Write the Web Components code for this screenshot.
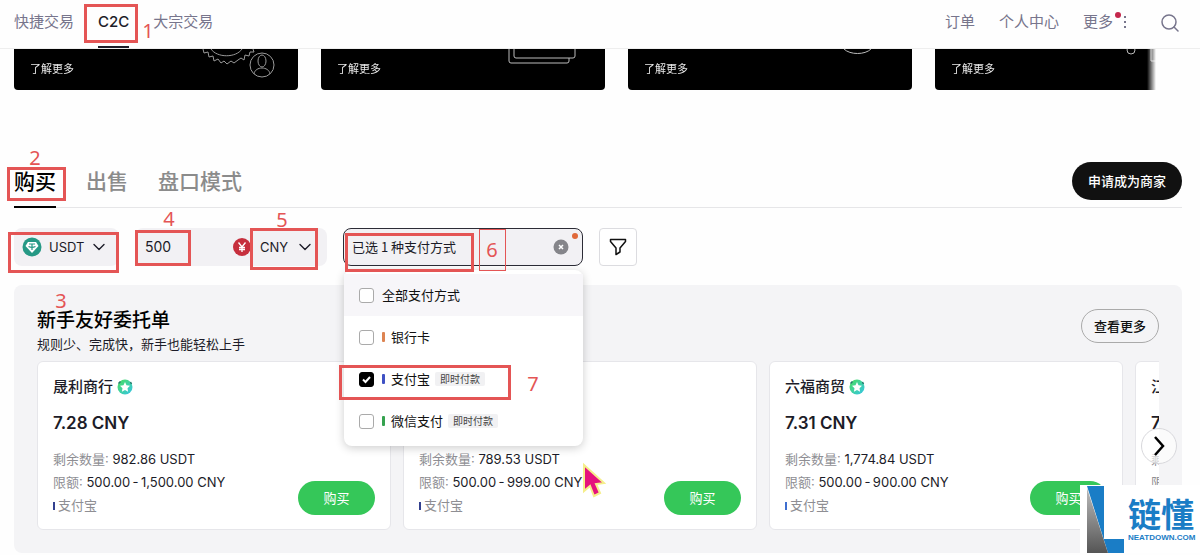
<!DOCTYPE html>
<html lang="zh-CN">
<head>
<meta charset="utf-8">
<title>C2C 交易</title>
<style>
    body {
        margin: 0;
        position: relative;
        background: #fefefe;
        color: #1c1c28;
        font: 13px/22px Inter, "Noto Sans CJK SC", sans-serif;
        overflow-x: hidden;
    }
    main {
        padding: 0 18px 0 14px;
    }
    .promos {
        display: flex;
        gap: 23px;
        margin-right: 26px;
        overflow: hidden;
        -webkit-mask-image: linear-gradient(to left, transparent, #000 9px);
        mask-image: linear-gradient(to left, transparent, #000 9px);
    }
    trade-tabs {
        margin-top: 72px;
    }
    .filters {
        display: flex;
        gap: 16px;
        margin: 20px 0 19px;
    }
    svg {
        display: block;
        fill: none;
    }
</style>
</head>
<body>
<page-header></page-header>
<main>
    <div class="promos">
        <promo-card>
            <svg width="134" height="41" stroke="#999" stroke-width="1">
                <path d="M39 0l1 4 4-1 1 5 4-1 1 5 4-2 3 4 3-2 3 3 4-3 3 2 4-3 3-2 3 2 1-5 4 1 1-4 4 0-1-3"/>
                <path d="M47 0c6 9 25 9 31 0"/>
                <circle cx="98" cy="16" r="12"/>
                <ellipse cx="98" cy="12" rx="4" ry="6"/>
                <path d="M90 25c1-8 15-8 16 0"/>
            </svg>
        </promo-card>
        <promo-card>
            <svg width="134" height="41" stroke="#bbb" stroke-width="1">
                <path d="M38 0v12q0 2 2 2h56q2 0 2-2V9M43 0v7q0 2 2 2h57q2 0 2-2V0"/>
            </svg>
        </promo-card>
        <promo-card>
            <svg width="134" height="41" stroke="#bbb" stroke-width="1">
                <path d="M66 0c6 6 21 6 27 0"/>
            </svg>
        </promo-card>
        <promo-card>
            <svg width="134" height="41" stroke="#bbb" stroke-width="1">
                <circle cx="46" cy="1" r="4"/>
                <path d="M66 0v12h8"/>
            </svg>
        </promo-card>
    </div>
    <trade-tabs></trade-tabs>
    <div class="filters">
        <coin-select></coin-select>
        <amount-field></amount-field>
        <pay-picker>
            <pay-option>全部支付方式</pay-option>
            <pay-option color="#dd8452">银行卡</pay-option>
            <pay-option color="#3f51c4" tag="即时付款" checked>支付宝</pay-option>
            <pay-option color="#35a24f" tag="即时付款">微信支付</pay-option>
        </pay-picker>
        <filter-button></filter-button>
    </div>
    <offer-panel>
        <offer-card price="7.28 CNY" amount="982.86 USDT" limit="500.00&thinsp;-&thinsp;1,500.00 CNY">晟利商行</offer-card>
        <offer-card price="7.30 CNY" amount="789.53 USDT" limit="500.00&thinsp;-&thinsp;999.00 CNY">商行</offer-card>
        <offer-card price="7.31 CNY" amount="1,774.84 USDT" limit="500.00&thinsp;-&thinsp;900.00 CNY" color="#3f6fd0">六福商贸</offer-card>
        <offer-card price="7" amount="" limit="">江</offer-card>
    </offer-panel>
</main>
<guide-marks></guide-marks>
<site-stamp></site-stamp>

<script>
    class BaseElement extends HTMLElement {
        constructor() {
            super()
            this.attachShadow({mode: 'open'})
        }

        connectedCallback() {
            this.shadowRoot.innerHTML = `
            <style>
                :host, * { box-sizing: border-box; }
                button, input, select {
                    font: inherit;
                    color: inherit;
                    margin: 0;
                    padding: 0;
                    border: 0;
                    background: none;
                    appearance: none;
                    outline: none;
                }
                button { cursor: pointer; }
                a { color: inherit; text-decoration: none; }
                svg { display: block; fill: none; flex: none; }
            </style>` + this.template()
        }
    }

    const chevron = `<svg width="12" height="8" stroke="#1c1c28" stroke-width="1.4" stroke-linecap="round" stroke-linejoin="round"><path d="M1 1.5l5 5 5-5"/></svg>`

    class PageHeader extends BaseElement {
        template() {
            return `
            <style>
                :host { display: block; }
                header {
                    display: flex;
                    justify-content: space-between;
                    height: 49px;
                    padding: 0 21px 0 14px;
                    border-bottom: 1px solid #eee;
                    font-size: 15px;
                    line-height: 43px;
                    color: #77758c;
                }
                nav { display: flex; gap: 24px; }
                .active {
                    color: #1c1c28;
                    font-weight: 500;
                    border-bottom: 2px solid #1c1c28;
                }
                .more { display: flex; gap: 10px; align-items: center; height: 43px; }
                .more span { position: relative; }
                .more i {
                    position: absolute;
                    left: 32px;
                    top: 12px;
                    width: 6px;
                    height: 6px;
                    border-radius: 50%;
                    background: #c4284c;
                }
                .search { height: 45px; margin-left: 10px; }
            </style>
            <header>
                <nav>
                    <a href="#">快捷交易</a>
                    <a href="#" class="active">C2C</a>
                    <a href="#">大宗交易</a>
                </nav>
                <nav>
                    <a href="#">订单</a>
                    <a href="#">个人中心</a>
                    <a href="#" class="more">
                        <span>更多<i></i></span>
                        <svg width="4" height="14"><path fill="#77758c" d="M1 1h2v2H1zM1 6h2v2H1zM1 11h2v2H1z"/></svg>
                    </a>
                    <button class="search" aria-label="搜索">
                        <svg width="18" height="18" stroke="#77758c" stroke-width="1.5" stroke-linecap="round"><circle cx="8" cy="8" r="7"/><path d="M13 13l4 4"/></svg>
                    </button>
                </nav>
            </header>`
        }
    }

    class PromoCard extends BaseElement {
        template() {
            return `
            <style>
                :host {
                    display: flex;
                    justify-content: space-between;
                    flex: 0 0 284px;
                    height: 41px;
                    background: #000;
                    border-radius: 0 0 4px 4px;
                }
                a { color: #e8e8e8; font-size: 11px; line-height: 40px; padding-left: 16px; }
            </style>
            <a href="#">了解更多</a>
            <slot></slot>`
        }
    }

    class TradeTabs extends BaseElement {
        template() {
            return `
            <style>
                :host {
                    display: flex;
                    justify-content: space-between;
                    align-items: flex-start;
                    height: 46px;
                    border-bottom: 1px solid #e6e6e8;
                }
                nav { display: flex; gap: 30px; font-size: 21px; font-weight: 500; line-height: 40px; color: #8b8b8b; }
                a { height: 46px; }
                .active { color: #000; border-bottom: 2px solid #000; }
                button {
                    height: 38px;
                    padding: 0 16px;
                    border-radius: 19px;
                    background: #111;
                    color: #fff;
                    font-weight: 500;
                }
            </style>
            <nav>
                <a href="#" class="active">购买</a>
                <a href="#">出售</a>
                <a href="#">盘口模式</a>
            </nav>
            <button>申请成为商家</button>`
        }
    }

    class CoinSelect extends BaseElement {
        template() {
            return `
            <style>
                :host {
                    display: flex;
                    align-items: center;
                    width: 105px;
                    height: 38px;
                    padding: 0 14px 0 8px;
                    border-radius: 8px;
                    background: #f2f1f4;
                }
                select { margin: 0 auto 0 7px; }
            </style>
            <svg width="20" height="20">
                <circle cx="10" cy="10" r="9.5" fill="#269985"/>
                <path d="M6 5h8l2.5 4L10 16 3.5 9z" fill="#fff"/>
                <path d="M7 7h6M10 7v6M6.5 9.5c2 1 5 1 7 0" stroke="#269985" stroke-width="1.2"/>
            </svg>
            <select aria-label="币种"><option>USDT</option></select>
            ${chevron}`
        }
    }

    class AmountField extends BaseElement {
        template() {
            return `
            <style>
                :host {
                    display: flex;
                    align-items: center;
                    width: 192px;
                    height: 38px;
                    padding: 0 16px 0 10px;
                    border-radius: 8px;
                    background: #f2f1f4;
                }
                input { flex: 1; min-width: 0; font-size: 14px; }
                select { margin: 0 10px 0 9px; }
            </style>
            <input type="text" aria-label="金额" value="500">
            <svg width="18" height="18">
                <circle cx="9" cy="9" r="9" fill="#c62f3d"/>
                <path d="M5.5 4.5L9 9l3.5-4.5M9 9v5M6 9.5h6M6 11.5h6" stroke="#fff" stroke-width="1.3"/>
            </svg>
            <select aria-label="法币"><option>CNY</option></select>
            ${chevron}`
        }
    }

    class PayPicker extends BaseElement {
        template() {
            return `
            <style>
                :host { display: block; position: relative; width: 240px; }
                .field {
                    display: flex;
                    align-items: center;
                    justify-content: space-between;
                    height: 38px;
                    padding: 0 13px 0 8px;
                    border: 1px solid #2c2c36;
                    border-radius: 8px;
                    background: #f2f1f4;
                    font-family: "Noto Sans CJK SC", sans-serif;
                }
                i {
                    position: absolute;
                    right: 5px;
                    top: 5px;
                    width: 6px;
                    height: 6px;
                    border-radius: 50%;
                    background: #e0693a;
                }
                .menu {
                    position: absolute;
                    z-index: 5;
                    top: 42px;
                    left: 1px;
                    right: 0;
                    padding: 4px 0;
                    border-radius: 8px;
                    background: #fff;
                    box-shadow: 0 2px 10px rgba(0,0,0,0.2);
                }
                ::slotted(:first-child) { background: #f7f6f9; }
            </style>
            <div class="field">
                <button aria-expanded="true">已选 1 种支付方式</button>
                <button aria-label="清除">
                    <svg width="16" height="16"><circle cx="8" cy="8" r="7.5" fill="#85858a"/><path d="M6 6l4 4M10 6l-4 4" stroke="#fff" stroke-width="1.5"/></svg>
                </button>
            </div>
            <i></i>
            <div class="menu"><slot></slot></div>`
        }
    }

    class PayOption extends BaseElement {
        template() {
            const color = this.getAttribute('color')
            const tag = this.getAttribute('tag')
            return `
            <style>
                :host { display: block; }
                label { display: flex; align-items: center; height: 42px; padding: 0 15px; color: #111; }
                input {
                    width: 15px;
                    height: 15px;
                    margin-right: 8px;
                    border: 1px solid #aaa;
                    border-radius: 3px;
                    background: #fff;
                }
                .box { display: grid; }
                .box > * { grid-area: 1 / 1; }
                input:checked { background: #000; border-color: #000; }
                .box svg { visibility: hidden; }
                input:checked + svg { visibility: visible; pointer-events: none; }
                .bar { width: 3px; height: 10px; margin-right: 6px; border-radius: 1px; background: ${color}; }
                .tag {
                    margin-left: 5px;
                    padding: 0 5px;
                    border-radius: 2px;
                    background: #f1f1f3;
                    color: #444;
                    font-size: 10px;
                    line-height: 14px;
                }
            </style>
            <label>
                <span class="box">
                    <input type="checkbox" ${this.hasAttribute('checked') ? 'checked' : ''}>
                    <svg width="15" height="15" stroke="#fff" stroke-width="2"><path d="M4 7.5l2.5 2.5L11 5"/></svg>
                </span>
                ${color ? '<span class="bar"></span>' : ''}
                <slot></slot>
                ${tag ? `<span class="tag">${tag}</span>` : ''}
            </label>`
        }
    }

    class FilterButton extends BaseElement {
        template() {
            return `
            <style>
                :host { display: block; }
                button {
                    display: flex;
                    align-items: center;
                    justify-content: center;
                    width: 38px;
                    height: 38px;
                    border: 1px solid #dcdce0;
                    border-radius: 4px;
                    background: #fff;
                }
            </style>
            <button aria-label="筛选">
                <svg width="18" height="18" stroke="#111" stroke-width="1.5" stroke-linejoin="round"><path d="M1.5 1.5h15v2L11 10v4l-4 2.5V10L1.5 3.5z"/></svg>
            </button>`
        }
    }

    class OfferPanel extends BaseElement {
        template() {
            return `
            <style>
                :host {
                    display: block;
                    padding: 24px 23px 23px;
                    border-radius: 8px;
                    background: #f4f4f6;
                }
                .head { display: flex; justify-content: space-between; align-items: flex-start; margin-bottom: 6px; }
                h2 { margin: 0; font-size: 19px; line-height: 24px; font-weight: 500; color: #000; }
                p { margin: 0; }
                .all {
                    height: 34px;
                    padding: 0 12px;
                    border: 1px solid #aaa;
                    border-radius: 17px;
                    color: #111;
                    font-weight: 500;
                }
                .carousel { position: relative; }
                .track { display: flex; gap: 12px; overflow: hidden; }
                .next {
                    position: absolute;
                    right: -18px;
                    top: calc(50% - 18px);
                    display: flex;
                    align-items: center;
                    justify-content: center;
                    width: 36px;
                    height: 36px;
                    border: 1px solid #d8d8dc;
                    border-radius: 50%;
                    background: rgba(255,255,255,0.6);
                }
            </style>
            <div class="head">
                <div>
                    <h2>新手友好委托单</h2>
                    <p>规则少、完成快，新手也能轻松上手</p>
                </div>
                <button class="all">查看更多</button>
            </div>
            <div class="carousel">
                <div class="track"><slot></slot></div>
                <button class="next" aria-label="下一页">
                    <svg width="12" height="20" stroke="#000" stroke-width="2.5"><path d="M2 1l8 9-8 9"/></svg>
                </button>
            </div>`
        }
    }

    class OfferCard extends BaseElement {
        template() {
            return `
            <style>
                :host {
                    display: flex;
                    justify-content: space-between;
                    align-items: flex-end;
                    flex: 0 0 calc((100% - 60px) / 3);
                    padding: 14px 15px 12px;
                    border: 1px solid #e6e6ea;
                    border-radius: 6px;
                    background: #fff;
                    white-space: nowrap;
                }
                .name { display: flex; align-items: center; gap: 4px; font-size: 15px; font-weight: 500; line-height: 22px; }
                .price { margin: 13px 0; font-size: 17px; font-weight: 600; line-height: 24px; }
                .row { line-height: 23px; height: 23px; }
                .row span { color: #8e8e93; }
                .pay { display: flex; align-items: center; gap: 3px; }
                .pay i { width: 2px; height: 8px; background: ${this.getAttribute('color') || '#33408f'}; }
                button {
                    width: 77px;
                    height: 34px;
                    margin-bottom: 2px;
                    border-radius: 17px;
                    background: #35c759;
                    color: #fff;
                }
            </style>
            <div>
                <div class="name">
                    <slot></slot>
                    <svg width="16" height="16">
                        <defs><linearGradient id="g" x1="0" y1="0" x2="1" y2="1"><stop offset="0" stop-color="#4ade5c"/><stop offset="1" stop-color="#35c4e8"/></linearGradient></defs>
                        <circle cx="8" cy="8" r="7.5" fill="url(#g)"/>
                        <path d="M1.5 4.5l2-2M13.5 3l1 2" stroke="#237a6c" stroke-width="1.5"/>
                        <path d="M8 3l1.5 3.2 3.5.5-2.5 2.5.6 3.5L8 11l-3.1 1.7.6-3.5L3 6.7l3.500-.5z" fill="#fff"/>
                    </svg>
                </div>
                <div class="price">${this.getAttribute('price')}</div>
                <div class="row"><span>剩余数量:</span> ${this.getAttribute('amount')}</div>
                <div class="row"><span>限额:</span> ${this.getAttribute('limit')}</div>
                <div class="row pay"><i></i><span>支付宝</span></div>
            </div>
            <button>购买</button>`
        }
    }

    // tutorial overlay: red frames with step numbers and the pointer
    class GuideMarks extends BaseElement {
        template() {
            const frames = [
                [84, 4, 54, 39], [7, 167, 59, 34], [8, 232, 111, 41], [135, 230, 56, 36],
                [250, 228, 68, 42], [345, 233, 129, 39], [339, 365, 172, 35]
            ]
            const steps = [[148, 31], [35, 158], [61, 301], [169, 219], [282, 220], [492, 250], [533, 384]]
            return `
            <style>
                :host {
                    position: absolute;
                    z-index: 10;
                    inset: 0;
                    pointer-events: none;
                    color: #e45555;
                    font: 20px/20px "Noto Sans", sans-serif;
                }
                div, span, svg { position: absolute; }
                div { border: 3px solid #e45555; }
                .thin { border-width: 1px; }
                span { width: 20px; text-align: center; }
            </style>
            ${frames.map(([x, y, w, h]) => `<div style="left:${x}px;top:${y}px;width:${w}px;height:${h}px"></div>`).join('')}
            <div class="thin" style="left:479px;top:229px;width:27px;height:42px"></div>
            ${steps.map(([x, y], i) => `<span style="left:${x - 10}px;top:${y - 10}px">${i + 1}</span>`).join('')}
            <svg width="28" height="40" style="left:580px;top:461px"><path d="M4 4v26l6-5 4 10 6-3-4-9 8-1z" fill="#e5127d" stroke="#f5ee8a" stroke-width="2"/></svg>`
        }
    }

    class SiteStamp extends BaseElement {
        template() {
            return `
            <style>
                :host {
                    position: absolute;
                    z-index: 11;
                    right: 0;
                    top: 485px;
                    display: flex;
                    gap: 4px;
                    width: 120px;
                    height: 70px;
                    padding-left: 7px;
                    background: #fff;
                    color: #1a7dc6;
                }
                .cn { font-size: 33px; font-weight: 700; line-height: 34px; margin-top: 13px; }
                .en { font: 700 8px/12px "Liberation Sans", sans-serif; }
            </style>
            <svg width="37" height="70">
                <defs><linearGradient id="s" x1="0" y1="0" x2="0" y2="1"><stop offset="0" stop-color="#bbb"/><stop offset="1" stop-color="#555"/></linearGradient></defs>
                <path d="M0 1h17v53h20v14H21z" fill="#1a7dc6"/>
                <path d="M0 3v65h21z" fill="url(#s)"/>
            </svg>
            <div>
                <div class="cn">链懂</div>
                <div class="en">NEATDOWN.COM</div>
            </div>`
        }
    }

    customElements.define('page-header', PageHeader)
    customElements.define('promo-card', PromoCard)
    customElements.define('trade-tabs', TradeTabs)
    customElements.define('coin-select', CoinSelect)
    customElements.define('amount-field', AmountField)
    customElements.define('pay-picker', PayPicker)
    customElements.define('pay-option', PayOption)
    customElements.define('filter-button', FilterButton)
    customElements.define('offer-panel', OfferPanel)
    customElements.define('offer-card', OfferCard)
    customElements.define('guide-marks', GuideMarks)
    customElements.define('site-stamp', SiteStamp)
</script>
</body>
</html>
